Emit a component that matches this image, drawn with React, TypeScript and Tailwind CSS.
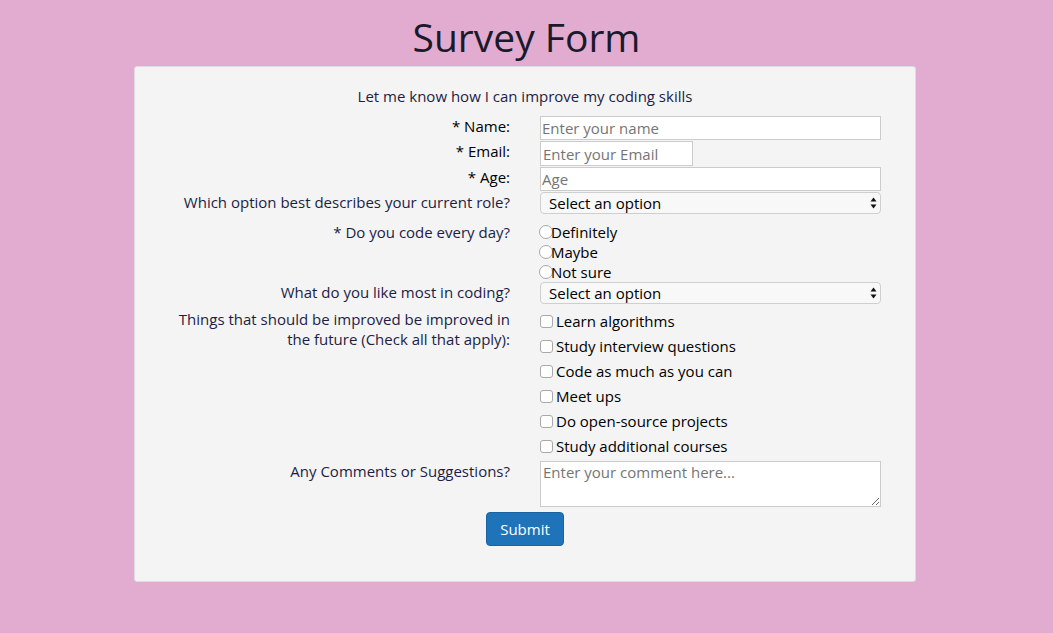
import React from "react";

const font = "font-['Open_Sans',sans-serif]";

const improvements = [
  "Learn algorithms",
  "Study interview questions",
  "Code as much as you can",
  "Meet ups",
  "Do open-source projects",
  "Study additional courses",
];

function Row({
  label,
  strong,
  children,
  className = "",
}: {
  label: React.ReactNode;
  strong?: boolean;
  children: React.ReactNode;
  className?: string;
}) {
  return (
    <div className={`flex items-start ${className}`}>
      <div
        className={`w-[375px] shrink-0 text-right text-[15px] leading-[20px] ${
          strong ? "text-black" : "text-[#1d1d45]"
        }`}
      >
        {label}
      </div>
      <div className="ml-[30px] w-[341px]">{children}</div>
    </div>
  );
}

function SelectBox() {
  return (
    <div className="relative">
      <select className="block h-[22px] w-full appearance-none rounded-[4px] border border-[#cfcfcf] bg-[#f8f8f8] pl-[8px] text-[15px] leading-[20px] text-black">
        <option>Select an option</option>
      </select>
      <svg
        className="pointer-events-none absolute right-[4px] top-[5px]"
        width="7"
        height="12"
        viewBox="0 0 7 12"
      >
        <path d="M3.5 0.5 L6.5 4.5 H0.5 Z" fill="#111" />
        <path d="M3.5 11.5 L6.5 7.5 H0.5 Z" fill="#111" />
      </svg>
    </div>
  );
}

export default function App() {
  return (
    <div className={`min-h-[633px] bg-[#e2acd1] pt-[13px] ${font}`}>
      <h1 className="text-center text-[39px] leading-[48px] text-[#1b1a2c]">
        Survey Form
      </h1>
      <form className="ml-[134px] mt-[5px] w-[782px] rounded-[3px] border border-[#dddddd] bg-[#f4f4f4] pb-[35px] pt-[19px]">
        <p className="text-center text-[15px] leading-[20px] text-[#1d1d45]">
          Let me know how I can improve my coding skills
        </p>

        <Row label="* Name:" strong className="mt-[10px]">
          <input
            placeholder="Enter your name"
            className="block h-[24px] w-full border border-[#cccccc] bg-white px-[1px] text-[15px] placeholder:text-[#757575]"
          />
        </Row>
        <Row label="* Email:" strong className="mt-[1px]">
          <input
            placeholder="Enter your Email"
            className="block h-[25px] w-[153px] border border-[#cccccc] bg-white px-[2px] text-[15px] placeholder:text-[#757575]"
          />
        </Row>
        <Row label="* Age:" strong className="mt-[1px]">
          <input
            placeholder="Age"
            className="block h-[24px] w-full border border-[#cccccc] bg-white px-[1px] text-[15px] placeholder:text-[#757575]"
          />
        </Row>
        <Row label="Which option best describes your current role?" className="mt-[1px]">
          <SelectBox />
        </Row>

        <Row label="* Do you code every day?" className="mt-[8px]">
          <div className="flex flex-col">
            {["Definitely", "Maybe", "Not sure"].map((o) => (
              <label key={o} className="flex h-[20px] items-center text-[15px] text-black">
                <input
                  type="radio"
                  name="daily"
                  className="ml-[-1px] mr-[-2px] h-[14px] w-[14px] appearance-none rounded-full border border-[#a9a9a9] bg-white"
                />
                {o}
              </label>
            ))}
          </div>
        </Row>

        <Row label="What do you like most in coding?">
          <SelectBox />
        </Row>

        <Row
          label={
            <>
              Things that should be improved be improved in
              <br />
              the future (Check all that apply):
            </>
          }
          className="mt-[5px]"
        >
          <div className="flex flex-col">
            {improvements.map((o) => (
              <label key={o} className="flex h-[25px] items-center text-[15px] text-black">
                <input
                  type="checkbox"
                  className="mr-[3px] h-[13px] w-[13px] appearance-none rounded-[3px] border border-[#a9a9a9] bg-white"
                />
                {o}
              </label>
            ))}
          </div>
        </Row>

        <Row label="Any Comments or Suggestions?" className="mt-[2px]">
          <textarea
            placeholder="Enter your comment here..."
            className="block h-[46px] w-full border border-[#cccccc] bg-white px-[2px] text-[15px] leading-[20px] placeholder:text-[#757575]"
          />
        </Row>

        <div className="mt-[5px] flex justify-center">
          <button
            type="submit"
            className="h-[34px] w-[78px] rounded-[4px] border border-[#1b63a0] bg-[#1f74b9] text-[15px] font-medium text-white"
          >
            Submit
          </button>
        </div>
      </form>
    </div>
  );
}
